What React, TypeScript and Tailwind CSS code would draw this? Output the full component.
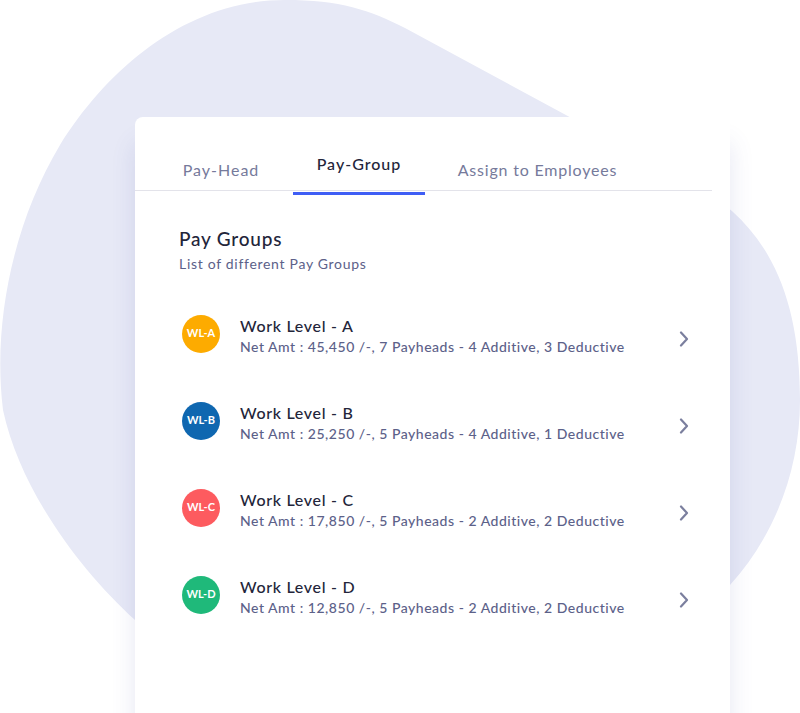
import React from "react";

const rows = [
  { tag: "WL-A", color: "bg-[#fdab00]", title: "Work Level - A", sub: "Net Amt : 45,450 /-, 7 Payheads - 4 Additive, 3 Deductive" },
  { tag: "WL-B", color: "bg-[#0f67b0]", title: "Work Level - B", sub: "Net Amt : 25,250 /-, 5 Payheads - 4 Additive, 1 Deductive" },
  { tag: "WL-C", color: "bg-[#fd5b5f]", title: "Work Level - C", sub: "Net Amt : 17,850 /-, 5 Payheads - 2 Additive, 2 Deductive" },
  { tag: "WL-D", color: "bg-[#1fb97a]", title: "Work Level - D", sub: "Net Amt : 12,850 /-, 5 Payheads - 2 Additive, 2 Deductive" },
];

function Chevron() {
  return (
    <svg width="10" height="16" viewBox="0 0 10 16" fill="none">
      <path d="M2 1.5 L8 8 L2 14.5" stroke="#7b7f9e" strokeWidth="2.2" strokeLinecap="round" strokeLinejoin="round" />
    </svg>
  );
}

export default function App() {
  return (
    <div className="relative w-[800px] h-[713px] overflow-hidden bg-white" style={{ fontFamily: "Lato, 'Noto Sans', sans-serif" }}>
      <svg className="absolute inset-0" width="800" height="713" viewBox="0 0 800 713">
        <path
          d="M 285 0 C 340 0 370 10 405 28 L 690 182 C 765 222 800 290 800 400 C 800 470 775 535 730 585 L 600 713 L 300 713 L 135 620 C 80 570 20 490 3 410 C -8 320 15 220 60 145 C 110 65 190 0 285 0 Z"
          fill="#e7e9f6"
        />
      </svg>
      <div className="relative pt-[117px] pl-[135px]">
        <div className="w-[595px] h-[596px] bg-white rounded-tl-[8px] shadow-[0_26px_24px_rgba(80,85,170,0.14)]">
          <div className="mr-[18px] h-[74px] flex items-end border-b border-[#e3e3ea]">
            <div className="ml-[14px] w-[144px] text-center pb-[8px] text-[16px] leading-[24px] tracking-[1px] text-[#767a9b]">Pay-Head</div>
            <div className="w-[132px] flex flex-col items-center">
              <div className="text-[16px] leading-[24px] tracking-[1px] text-[#23253a] font-medium">Pay-Group</div>
              <div className="mt-[16px] mb-[-5px] w-full h-[3px] bg-[#3f5ef5]"></div>
            </div>
            <div className="w-[225px] text-center pb-[8px] text-[16px] leading-[24px] tracking-[0.8px] text-[#767a9b]">Assign to Employees</div>
          </div>
          <div className="pt-[35px] pl-[44px]">
            <div className="text-[19px] leading-[26px] tracking-[0.8px] text-[#23253a] font-medium">Pay Groups</div>
            <div className="mt-[2px] text-[14px] leading-[20px] tracking-[0.7px] text-[#5c6189]">List of different Pay Groups</div>
          </div>
          <div className="mt-[16px] flex flex-col">
            {rows.map((r) => (
              <div key={r.tag} className="h-[87px] flex items-center pl-[47px] pr-[41px]">
                <div className={`w-[38px] h-[38px] rounded-full ${r.color} flex items-center justify-center text-white text-[11px] font-bold shrink-0`}>
                  {r.tag}
                </div>
                <div className="ml-[20px] mt-[5px] flex-1">
                  <div className="text-[16px] leading-[22px] tracking-[0.7px] text-[#23253a] font-medium">{r.title}</div>
                  <div className="text-[14px] leading-[20px] tracking-[0.52px] text-[#5c6189] font-medium">{r.sub}</div>
                </div>
                <div className="mt-[10px]">
                  <Chevron />
                </div>
              </div>
            ))}
          </div>
        </div>
      </div>
    </div>
  );
}
